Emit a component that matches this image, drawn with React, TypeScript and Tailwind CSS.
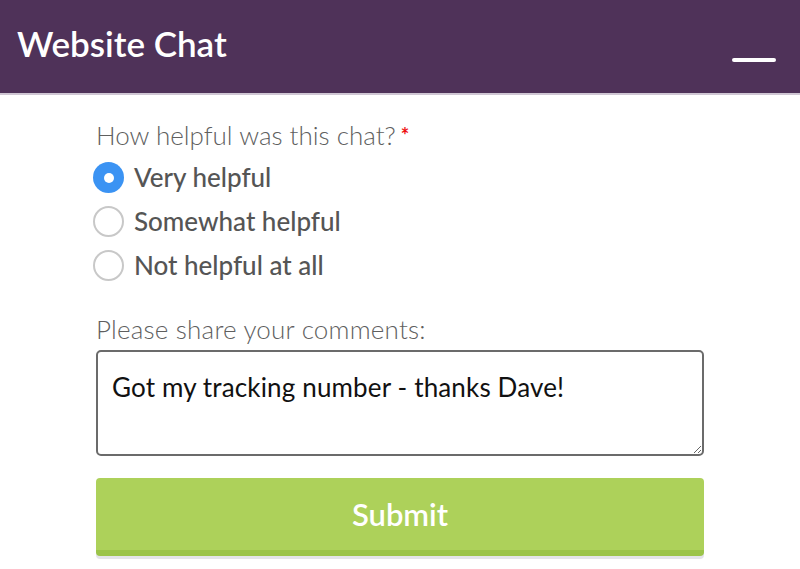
import React from 'react';

const options = ['Very helpful', 'Somewhat helpful', 'Not helpful at all'];

export default function App() {
  const [choice, setChoice] = React.useState(0);
  const [comment, setComment] = React.useState('Got my tracking number - thanks Dave!');

  return (
    <div className="w-[800px] h-[569px] bg-white overflow-hidden font-['Lato','Open_Sans',sans-serif]">
      <header className="h-[95px] bg-[#4f3259] border-b-2 border-[#cfc6d3] flex items-start justify-between pl-[17px] pr-[24px]">
        <h1 className="text-[35px] font-semibold text-white mt-[21px] leading-[44px]">Website Chat</h1>
        <button className="mt-[58px] w-[44px] h-[4px] bg-white rounded-full" aria-label="Minimize" />
      </header>

      <form className="px-[96px] pt-[24px]" onSubmit={e => e.preventDefault()}>
        <p className="text-[26px] font-light text-[#5f5f5f] leading-[32px]">
          How helpful was this chat?<span className="text-[#ee1111] text-[20px] font-bold align-top ml-[5px]">*</span>
        </p>

        <div className="mt-[10px] flex flex-col gap-[11px]">
          {options.map((label, i) => (
            <label key={label} className="-ml-[3px] flex items-center gap-[10px] cursor-pointer">
              {choice === i ? (
                <span className="w-[31px] h-[31px] rounded-full bg-[#3b93f3] flex items-center justify-center shrink-0">
                  <span className="w-[10px] h-[10px] rounded-full bg-white" />
                </span>
              ) : (
                <span className="w-[31px] h-[31px] rounded-full border-2 border-[#c8c8c8] bg-white shrink-0" />
              )}
              <input type="radio" className="hidden" checked={choice === i} onChange={() => setChoice(i)} />
              <span className="text-[26px] font-medium text-[#555555] leading-[33px]">{label}</span>
            </label>
          ))}
        </div>

        <p className="mt-[31px] text-[26px] font-light text-[#5f5f5f] leading-[32px] tracking-[0.2px]">Please share your comments:</p>

        <textarea
          value={comment}
          onChange={e => setComment(e.target.value)}
          className="mt-[5px] block w-full h-[106px] border-2 border-[#6b6b6b] rounded-[5px] px-[14px] py-[19px] text-[26px] text-[#111111] leading-[32px] tracking-[0.15px] resize-y outline-none"
        />

        <button
          type="submit"
          className="mt-[22px] w-full h-[78px] rounded-[4px] bg-[#add15a] border-b-[6px] border-[#9cc44a] shadow-[0_3px_0_#e4e4ea] text-white text-[31px] font-semibold"
        >
          Submit
        </button>
      </form>
    </div>
  );
}
